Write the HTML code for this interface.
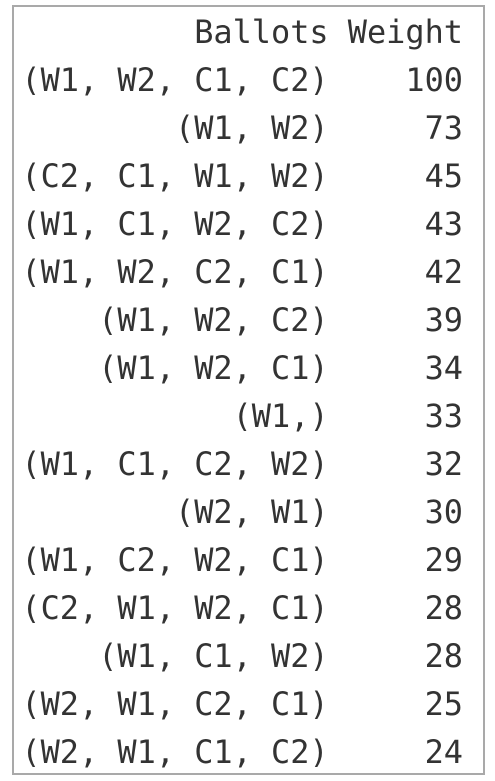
<!DOCTYPE html><html><head><style>
body{margin:0;background:#fff;width:495px;height:781px;overflow:hidden;position:relative}
.box{position:absolute;left:12px;top:5px;width:469px;height:766px;border:2px solid #a9a9a9;box-sizing:content-box}
pre{position:absolute;right:32px;top:8px;margin:0;font-family:"DejaVu Sans Mono","Liberation Mono",monospace;font-size:31.9px;line-height:48px;color:#333;text-align:right}
</style></head><body><div class="box"></div>
<pre>         Ballots Weight
(W1, W2, C1, C2)    100
        (W1, W2)     73
(C2, C1, W1, W2)     45
(W1, C1, W2, C2)     43
(W1, W2, C2, C1)     42
    (W1, W2, C2)     39
    (W1, W2, C1)     34
           (W1,)     33
(W1, C1, C2, W2)     32
        (W2, W1)     30
(W1, C2, W2, C1)     29
(C2, W1, W2, C1)     28
    (W1, C1, W2)     28
(W2, W1, C2, C1)     25
(W2, W1, C1, C2)     24</pre>
</body></html>
